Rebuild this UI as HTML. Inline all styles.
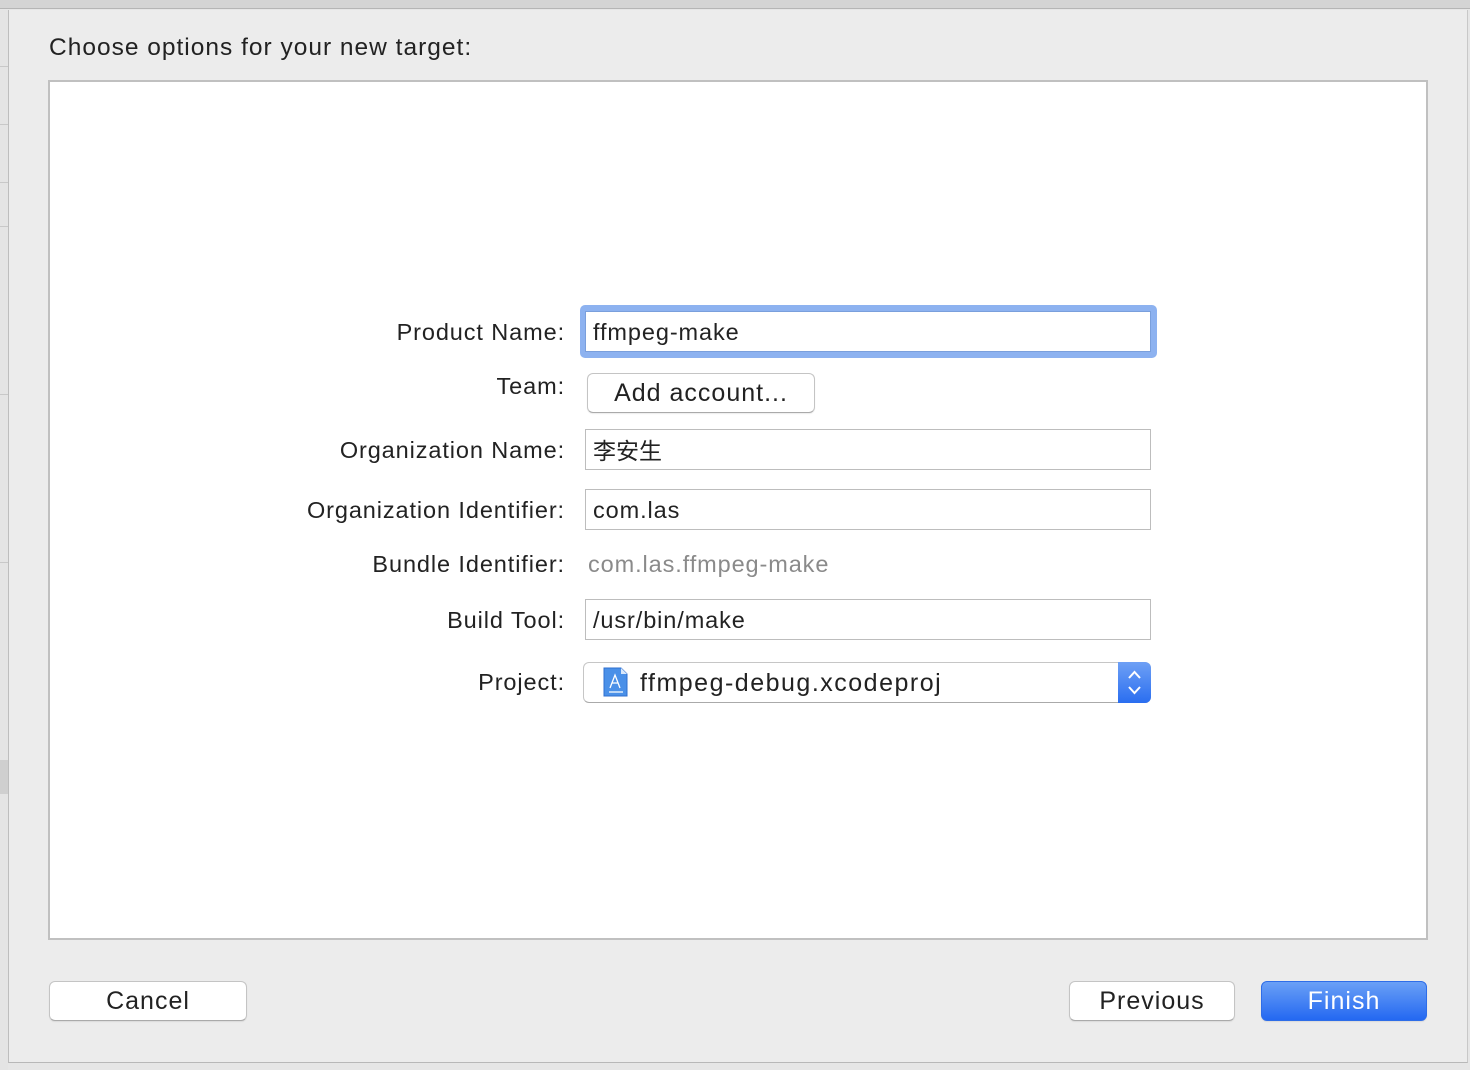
<!DOCTYPE html>
<html><head><meta charset="utf-8"><style>
*{margin:0;padding:0;box-sizing:border-box}
body{width:1470px;height:1070px;background:#e6e6e6;position:relative;overflow:hidden;font-family:"Liberation Sans","Noto Sans CJK SC",sans-serif;color:#222}
.abs{position:absolute}
.lbl{position:absolute;right:905px;font-size:23.5px;letter-spacing:0.9px;color:#222;white-space:nowrap;line-height:28px}
.tf{position:absolute;left:585px;width:566px;height:41px;background:#fff;border:1px solid #bdbdbd;font-size:23.5px;letter-spacing:0.9px;padding:6px 0 0 7px;line-height:28px;white-space:nowrap}
.btn{position:absolute;background:#fff;border:1px solid #c4c4c4;border-bottom-color:#aaa;border-radius:6px;font-size:25px;letter-spacing:1px;text-align:center;box-shadow:0 1px 1px rgba(0,0,0,.08);line-height:30px}
.cjk{font-family:"Noto Sans CJK SC",sans-serif;letter-spacing:0}
</style></head><body>
<div class="abs" style="left:0;top:0;width:1470px;height:9px;background:#d4d4d4;border-bottom:1px solid #b5b5b5"></div>
<div class="abs" style="left:0;top:10px;width:8px;height:1060px;background:#e4e4e4"></div>
<div class="abs" style="left:0;top:66px;width:8px;height:1px;background:#c8c8c8"></div>
<div class="abs" style="left:0;top:124px;width:8px;height:1px;background:#c8c8c8"></div>
<div class="abs" style="left:0;top:182px;width:8px;height:1px;background:#c8c8c8"></div>
<div class="abs" style="left:0;top:226px;width:8px;height:1px;background:#c8c8c8"></div>
<div class="abs" style="left:0;top:394px;width:8px;height:1px;background:#c8c8c8"></div>
<div class="abs" style="left:0;top:562px;width:8px;height:1px;background:#c8c8c8"></div>
<div class="abs" style="left:0;top:760px;width:8px;height:34px;background:#cfcfcf"></div>
<div class="abs" style="left:8px;top:10px;width:1460px;height:1053px;background:#ececec;border-left:1px solid #bdbdbd;border-right:1px solid #c8c8c8;border-bottom:1px solid #b8b8b8"></div>
<div class="abs" style="left:49px;top:33px;font-size:24.5px;letter-spacing:1px;color:#222;line-height:30px">Choose options for your new target:</div>
<div class="abs" style="left:48px;top:80px;width:1380px;height:860px;background:#fff;border:2px solid #c0c0c0"></div>

<div class="lbl" style="top:318px">Product Name:</div>
<div class="abs" style="left:580px;top:305px;width:577px;height:53px;border-radius:5px;background:#8db2f0"></div>
<div class="tf" style="top:311px;left:585px;width:566px;border-color:#7a9fdc">ffmpeg-make</div>

<div class="lbl" style="top:372px">Team:</div>
<div class="btn" style="left:587px;top:373px;width:228px;height:40px;padding-top:4px">Add account...</div>

<div class="lbl" style="top:436px">Organization Name:</div>
<div class="tf" style="top:429px;padding-top:5px"><span class="cjk" style="font-size:23px;line-height:28px">李安生</span></div>

<div class="lbl" style="top:496px">Organization Identifier:</div>
<div class="tf" style="top:489px">com.las</div>

<div class="lbl" style="top:550px">Bundle Identifier:</div>
<div class="abs" style="left:588px;top:550px;font-size:23.5px;letter-spacing:0.9px;line-height:28px;color:#8a8a8a">com.las.ffmpeg-make</div>

<div class="lbl" style="top:606px">Build Tool:</div>
<div class="tf" style="top:599px">/usr/bin/make</div>

<div class="lbl" style="top:668px">Project:</div>
<div class="abs" style="left:583px;top:662px;width:568px;height:41px;background:#fff;border:1px solid #c6c6c6;border-bottom-color:#aaa;border-radius:6px"></div>
<svg class="abs" style="left:603px;top:667px" width="26" height="30" viewBox="0 0 26 30">
<path d="M1 1h17l6 6v22H1z" fill="#4a90e8" stroke="#2f6fcf"/>
<path d="M18 1v6h6z" fill="#d9e8fb"/>
<path d="M7 21l5-13 5 13M9 16h6M6 25h14" stroke="#fff" stroke-width="1.3" fill="none"/>
</svg>
<div class="abs" style="left:640px;top:668px;font-size:25px;letter-spacing:1.5px;line-height:30px;color:#222">ffmpeg-debug.xcodeproj</div>
<div class="abs" style="left:1118px;top:662px;width:33px;height:41px;border-radius:0 6px 6px 0;background:linear-gradient(#6ea0f5,#2a6ef0)"></div>
<svg class="abs" style="left:1118px;top:662px" width="33" height="41" viewBox="0 0 33 41">
<path d="M11 16l5.5-6 5.5 6M11 25l5.5 6 5.5-6" stroke="#fff" stroke-width="2" fill="none"/>
</svg>

<div class="btn" style="left:49px;top:981px;width:198px;height:40px;padding-top:4px">Cancel</div>
<div class="btn" style="left:1069px;top:981px;width:166px;height:40px;padding-top:4px">Previous</div>
<div class="btn" style="left:1261px;top:981px;width:166px;height:40px;padding-top:4px;background:linear-gradient(#6aa0f6,#2468f1);border-color:#2e6de8;color:#fff">Finish</div>
</body></html>
